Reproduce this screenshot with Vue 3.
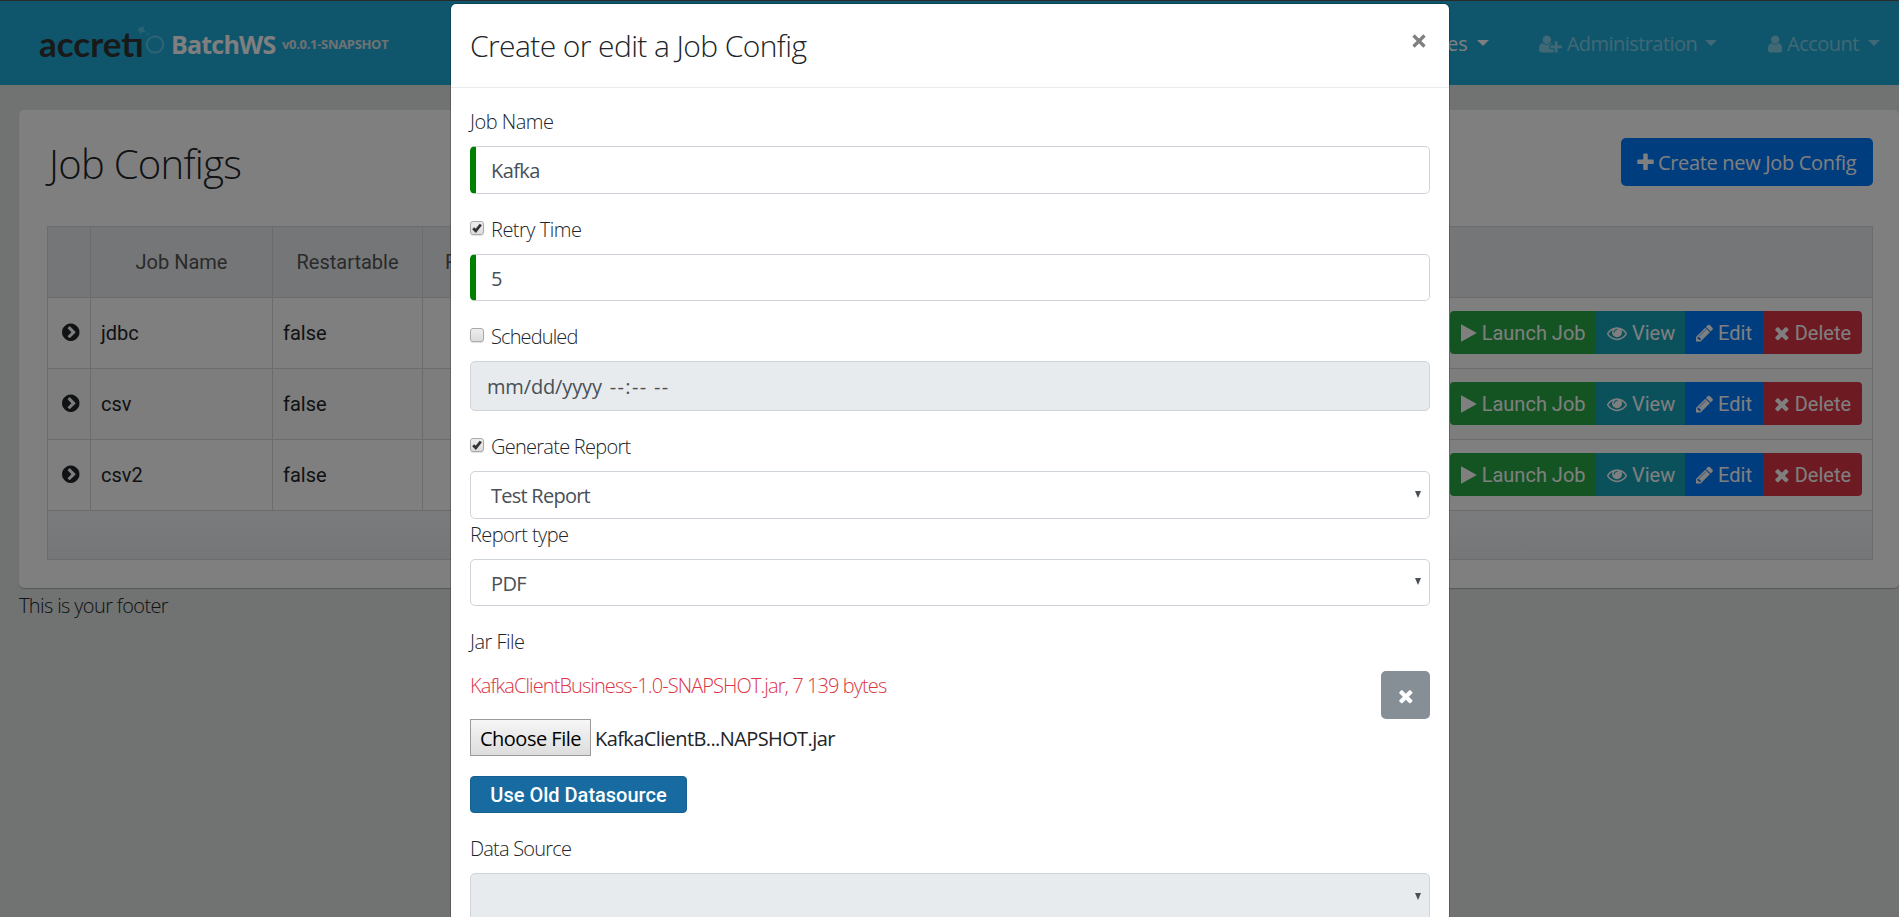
<script setup>
import { ref } from 'vue'

const icons = {
  play: { box: '192 0 1408 1792', w: 15.7, d: 'M1576 927l-1328 738q-23 13-39.5 3t-16.5-36v-1472q0-26 16.5-36t39.5 3l1328 738q23 13 23 31t-23 31z' },
  eye: { box: '0 0 1792 1792', w: 20, d: 'M1664 960q-152-236-381-353 61 104 61 225 0 185-131.5 316.5t-316.5 131.5-316.5-131.5-131.5-316.5q0-121 61-225-229 117-381 353 133 205 333.5 326.5t434.5 121.5 434.5-121.5 333.5-326.5zm-720-384q0-20-14-34t-34-14q-125 0-214.5 89.5t-89.5 214.5q0 20 14 34t34 14 34-14 14-34q0-86 61-147t147-61q20 0 34-14t14-34zm848 384q0 34-20 69-140 230-376.5 368.5t-499.5 138.5-499.5-139-376.5-368q-20-35-20-69t20-69q140-229 376.5-368t499.5-139 499.5 139 376.5 368q20 35 20 69z' },
  pencil: { box: '128 0 1536 1792', w: 17.1, d: 'M491 1536l91-91-235-235-91 91v107h128v128h107zm523-928q0-22-22-22-10 0-17 7l-542 542q-7 7-7 17 0 22 22 22 10 0 17-7l542-542q7-7 7-17zm-54-192l416 416-832 832h-416v-416zm683 96q0 53-37 90l-166 166-416-416 166-165q36-38 90-38 53 0 91 38l235 234q37 39 37 91z' },
  times: { box: '192 0 1408 1792', w: 15.7, d: 'M1490 1322q0 40-28 68l-136 136q-28 28-68 28t-68-28l-294-294-294 294q-28 28-68 28t-68-28l-136-136q-28-28-28-68t28-68l294-294-294-294q-28-28-28-68t28-68l136-136q28-28 68-28t68 28l294 294 294-294q28-28 68-28t68 28l136 136q28 28 28 68t-28 68l-294 294 294 294q28 28 28 68z' },
  plus: { box: '192 0 1408 1792', w: 15.7, d: 'M1600 736v192q0 40-28 68t-68 28h-416v416q0 40-28 68t-68 28h-192q-40 0-68-28t-28-68v-416h-416q-40 0-68-28t-28-68v-192q0-40 28-68t68-28h416v-416q0-40 28-68t68-28h192q40 0 68 28t28 68v416h416q40 0 68 28t28 68z' },
  chevron: { box: '128 0 1536 1792', w: 17.5, d: 'M845 1395l454-454q19-19 19-45t-19-45l-454-454q-19-19-45-19t-45 19l-102 102q-19 19-19 45t19 45l307 307-307 307q-19 19-19 45t19 45l102 102q19 19 45 19t45-19zm819-499q0 209-103 385.5t-279.5 279.5-385.5 103-385.5-103-279.5-279.5-103-385.5 103-385.5 279.5-279.5 385.5-103 385.5 103 279.5 279.5 103 385.5z' },
  user: { box: '256 0 1280 1792', w: 14.3, d: 'M1536 1399q0 109-62.5 187t-150.5 78h-854q-88 0-150.5-78t-62.5-187q0-85 8.5-160.5t31.5-152 58.5-131 94-89 134.5-34.5q131 128 313 128t313-128q76 0 134.5 34.5t94 89 58.5 131 31.5 152 8.5 160.5zm-256-887q0 159-112.5 271.5t-271.5 112.5-271.5-112.5-112.5-271.5 112.5-271.5 271.5-112.5 271.5 112.5 112.5 271.5z' },
  userPlus: { box: '0 0 2048 1792', w: 22.9, d: 'M704 896q-159 0-271.5-112.5t-112.5-271.5 112.5-271.5 271.5-112.5 271.5 112.5 112.5 271.5-112.5 271.5-271.5 112.5zm960 128h352q13 0 22.5 9.5t9.5 22.5v192q0 13-9.5 22.5t-22.5 9.5h-352v352q0 13-9.5 22.5t-22.5 9.5h-192q-13 0-22.5-9.5t-9.5-22.5v-352h-352q-13 0-22.5-9.5t-9.5-22.5v-192q0-13 9.5-22.5t22.5-9.5h352v-352q0-13 9.5-22.5t22.5-9.5h192q13 0 22.5 9.5t9.5 22.5v352zm-736 224q0 52 38 90t90 38h256v238q-68 50-171 50h-874q-121 0-194-69t-73-190q0-53 3.5-103.5t14-109 26.5-108.5 43-97.5 62-81 85.5-53.5 111.5-20q19 0 39 17 79 61 154.5 91.5t164.5 30.5 164.5-30.5 154.5-91.5q20-17 39-17 132 0 217 96h-223q-52 0-90 38t-38 90v192z' },
}

const jobs = ref([
  { name: 'jdbc', restartable: false },
  { name: 'csv', restartable: false },
  { name: 'csv2', restartable: false },
])

const actions = [
  { label: 'Launch Job', icon: 'play', kind: 'launch' },
  { label: 'View', icon: 'eye', kind: 'view' },
  { label: 'Edit', icon: 'pencil', kind: 'edit' },
  { label: 'Delete', icon: 'times', kind: 'delete' },
]
</script>

<template>
  <div class="page">
    <header class="navbar">
      <div class="brand">
        <span class="logo">
          <span class="logo-text">accretı</span>
          <svg class="logo-ring" width="30" height="30" viewBox="0 0 30 30">
            <circle cx="18" cy="19.500" r="8.200" fill="none" stroke="currentColor" stroke-width="2.200" />
            <path d="M1 1.500l3 1.300L7.300 1 6.500 4.300 8.500 7 5.200 7 3 9.500 2.700 6.300 0 4.800 2.200 3.800z" fill="currentColor" />
            <circle cx="10.800" cy="9" r="1.100" fill="currentColor" />
          </svg>
        </span>
        <span class="brand-name">BatchWS</span>
        <span class="version">v0.0.1-SNAPSHOT</span>
      </div>
      <nav class="menu">
        <span class="menu-item active"><span class="t-entities">Entities</span><i class="caret"></i></span>
        <span class="menu-item admin">
          <svg class="icon" :viewBox="icons.userPlus.box" width="22.9" height="20"><path :d="icons.userPlus.d" /></svg>
          <span class="t-admin">Administration</span><i class="caret"></i>
        </span>
        <span class="menu-item account">
          <svg class="icon" :viewBox="icons.user.box" width="14.3" height="20"><path :d="icons.user.d" /></svg>
          <span class="t-account">Account</span><i class="caret"></i>
        </span>
      </nav>
    </header>

    <main class="card">
      <div class="card-head">
        <h2>Job Configs</h2>
        <button class="create">
          <svg class="icon" :viewBox="icons.plus.box" width="17" height="21"><path :d="icons.plus.d" /></svg>
          <span>Create new Job Config</span>
        </button>
      </div>
      <div class="table">
        <div class="row head">
          <div></div><div>Job Name</div><div>Restartable</div><div class="retry"><span>Retry Time</span></div>
        </div>
        <div v-for="job in jobs" :key="job.name" class="row">
          <div class="toggle"><svg class="icon" :viewBox="icons.chevron.box" width="17.5" height="20.400"><path :d="icons.chevron.d" /></svg></div>
          <div>{{ job.name }}</div>
          <div>{{ job.restartable }}</div>
          <div class="actions">
            <span v-for="a in actions" :key="a.kind" class="action" :class="a.kind">
              <svg class="icon" :viewBox="icons[a.icon].box" :width="icons[a.icon].w" height="20"><path :d="icons[a.icon].d" /></svg>
              <span>{{ a.label }}</span>
            </span>
          </div>
        </div>
        <div class="table-foot"></div>
      </div>
    </main>
    <footer>This is your footer</footer>

    <div class="backdrop">
      <section class="modal">
        <div class="modal-head">
          <h4>Create or edit a Job Config</h4>
          <svg class="close" width="14" height="14" viewBox="0 0 14 14"><path d="M1.500 1.500l11 11M12.500 1.500l-11 11" /></svg>
        </div>
        <div class="modal-body">
          <label class="t-jobname">Job Name</label>
          <div class="field valid h48"><span class="t-kafka">Kafka</span></div>

          <label class="gap"><i class="check"><svg viewBox="0 0 14 14"><path d="M3.200 7.200l2.600 2.600 5-6.300" /></svg></i><span class="t-retry">Retry Time</span></label>
          <div class="field valid h47"><span>5</span></div>

          <label class="gap"><i class="check"></i><span class="t-sched">Scheduled</span></label>
          <div class="field disabled date"><span class="t-date">mm/dd/yyyy</span><span class="t-time">--:-- --</span></div>

          <label class="gap"><i class="check"><svg viewBox="0 0 14 14"><path d="M3.200 7.200l2.600 2.600 5-6.300" /></svg></i><span class="t-gen">Generate Report</span></label>
          <div class="field h48 select"><span class="t-test">Test Report</span><i class="arrow"></i></div>

          <label class="t-type">Report type</label>
          <div class="field h47 select"><span class="t-pdf">PDF</span><i class="arrow"></i></div>

          <label class="gap t-jar">Jar File</label>
          <div class="upload">
            <span class="file-info">KafkaClientBusiness-1.0-SNAPSHOT.jar, 7 139 bytes</span>
            <button class="remove"><svg class="icon" :viewBox="icons.times.box" width="15.7" height="20"><path :d="icons.times.d" /></svg></button>
          </div>
          <div class="chooser">
            <button class="choose"><span>Choose File</span></button>
            <span class="file-name">KafkaClientB...NAPSHOT.jar</span>
          </div>
          <button class="old-source"><span>Use Old Datasource</span></button>

          <label class="gap t-ds">Data Source</label>
          <div class="field h48 select disabled"><span></span><i class="arrow"></i></div>
        </div>
      </section>
    </div>
    <div class="top-line"></div>
  </div>
</template>

<style>
body {
  background: #e1e6e3;
  overflow: hidden;
}
</style>

<style scoped>
* {
  box-sizing: border-box;
}
.page {
  position: relative;
  height: 917px;
  overflow: hidden;
  background: #e1e6e3;
  color: #212529;
  font: 300 20px/30px "Open Sans", "Noto Sans", sans-serif;
  white-space: nowrap;
}
button {
  border: 0;
  padding: 0;
  font: inherit;
  color: inherit;
}
.icon {
  flex: none;
  fill: currentColor;
}

/* navbar */
.navbar {
  display: flex;
  justify-content: space-between;
  height: 85px;
  padding: 0 19px 0 39px;
  background: #1eacda;
}
.brand {
  display: flex;
  align-items: center;
  color: #fff;
}
.logo {
  display: flex;
  width: 132px;
  height: 85px;
  align-items: center;
}
.logo-text {
  flex: none;
  width: 98px;
  font: 700 35px/40px Lato, sans-serif;
  color: #333;
}
.logo-ring {
  flex: none;
  margin-top: -5px;
  color: #56c4e8;
}
.brand-name {
  width: 111px;
  font-size: 25px;
  font-weight: 700;
  letter-spacing: -0.8px;
  margin-top: 3px;
}
.version {
  font-size: 13px;
  font-weight: 700;
  letter-spacing: -0.32px;
  margin-top: 3px;
  color: #dde5e8;
}
.menu {
  display: flex;
  align-items: center;
  font-weight: 400;
}
.menu-item {
  display: flex;
  align-items: center;
  padding-top: 3px;
  color: rgba(255, 255, 255, 0.45);
}
.menu-item.active {
  color: #fff;
}
.admin {
  margin-left: 50px;
}
.account {
  margin-left: 51px;
}
.menu-item .icon {
  margin-right: 5px;
}
.caret {
  margin: -3px 0 0 9px;
  border: 6px solid transparent;
  border-top-color: currentColor;
  border-bottom: 0;
}
.t-admin {
  width: 129px;
  letter-spacing: -0.55px;
}
.t-account {
  width: 72px;
  letter-spacing: -0.5px;
}

/* job list */
.card {
  margin: 25px 0 0 19px;
  height: 478px;
  padding: 28px 26px 0 28px;
  border-radius: 5px;
  background: #fff;
  box-shadow: 0 1px 1px rgba(0, 0, 0, 0.25);
}
.card-head {
  display: flex;
  justify-content: space-between;
  height: 88px;
}
h2 {
  margin: 0;
  padding: 2px 0 0 2px;
  font-size: 40px;
  font-weight: 300;
  line-height: 48px;
  letter-spacing: -0.7px;
}
.create {
  display: flex;
  align-items: center;
  width: 252px;
  height: 48px;
  padding: 1px 0 0 16px;
  gap: 4px;
  border-radius: 5px;
  background: #007bff;
  color: #fff;
  font-weight: 400;
  letter-spacing: -0.33px;
}
.table {
  border: 1px solid #d9d9d9;
  font-family: Roboto, sans-serif;
  font-weight: 400;
}
.row {
  display: grid;
  grid-template-columns: 43px 182px 150px 1fr;
  height: 71px;
  border-bottom: 1px solid #d9d9d9;
}
.row:nth-child(odd):not(.head) {
  background: #fbfbfb;
}
.row > div {
  display: flex;
  align-items: center;
  padding: 0 0 1px 10px;
  border-right: 1px solid #d9d9d9;
}
.row > div:last-child {
  border-right: 0;
}
.row.head {
  background: #ebedf0;
  color: #555;
}
.row.head > div {
  justify-content: center;
  padding: 0;
}
.row.head > .retry {
  justify-content: flex-start;
  padding-left: 22px;
}
.retry span {
  width: 12px;
  overflow: hidden;
}
.row > .toggle {
  padding-left: 14px;
}
.row > .actions {
  justify-content: flex-end;
  padding-right: 10px;
}
.action {
  display: flex;
  align-items: center;
  height: 43px;
  padding-left: 11px;
  gap: 5px;
  color: #fff;
}
.launch { width: 146px; background: #28a745; border-radius: 4px 0 0 4px; }
.view { width: 89px; background: #17a2b8; }
.edit { width: 78px; background: #007bff; }
.delete { width: 99px; background: #dc3545; border-radius: 0 4px 4px 0; }
.table-foot {
  height: 48px;
  background: linear-gradient(#f6f7f9, #ebedf0);
}
footer {
  margin-top: 3px;
  padding-left: 19px;
  letter-spacing: -0.63px;
}

/* dialog */
.backdrop {
  position: absolute;
  inset: 0;
  display: flex;
  justify-content: center;
  align-items: flex-start;
  padding: 3px 0 0 1px;
  background: rgba(0, 0, 0, 0.5);
}
.modal {
  width: 1000px;
  height: 1100px;
  border: 1px solid rgba(0, 0, 0, 0.2);
  border-radius: 6px;
  background: #fff;
  background-clip: padding-box;
}
.modal-head {
  display: flex;
  justify-content: space-between;
  height: 84px;
  padding: 20px 23px 0 19px;
  border-bottom: 1px solid #e9ecef;
}
h4 {
  margin: 0;
  padding-top: 1px;
  font-size: 30px;
  font-weight: 300;
  line-height: 42px;
  letter-spacing: -0.6px;
}
.close {
  margin-top: 10px;
  fill: none;
  stroke: #7f7f7f;
  stroke-width: 3.2;
}
.modal-body {
  padding: 18px 19px 0;
}
label {
  display: flex;
  height: 40px;
  padding-top: 1px;
  letter-spacing: -0.5px;
}
.gap {
  margin-top: 20px;
}
.t-sched {
  letter-spacing: -0.88px;
}
.t-gen {
  letter-spacing: -0.74px;
}
.t-type {
  letter-spacing: -0.6px;
}
.t-jar {
  height: 45px;
}
.t-ds {
  letter-spacing: -0.8px;
}
.check {
  width: 14px;
  height: 14px;
  margin: 6px 7px 0 0;
  border: 1px solid #a9a9a9;
  border-radius: 3px;
  background: linear-gradient(#eee, #dcdcdc);
  box-shadow: 0 1px 1px rgba(0, 0, 0, 0.12);
}
.check svg {
  display: block;
  width: 14px;
  height: 14px;
  margin: -1px;
  fill: none;
  stroke: #333;
  stroke-width: 2.8;
}
.field {
  display: flex;
  align-items: center;
  height: 48px;
  padding: 2px 8px 0 20px;
  border: 1px solid #ced4da;
  border-radius: 5px;
  background: #fff;
  color: #495057;
  font-weight: 400;
  letter-spacing: -0.6px;
}
.h47 {
  height: 47px;
}
.valid {
  padding-left: 15px;
  border-left: 6px solid #008000;
}
.disabled {
  background: #e7ebee;
}
.date {
  height: 50px;
  padding-left: 16px;
  gap: 8px;
}
.t-date {
  letter-spacing: -0.15px;
}
.t-time {
  letter-spacing: 1.35px;
}
.t-test {
  letter-spacing: -0.75px;
}
.select {
  justify-content: space-between;
}
.arrow {
  margin-top: -4px;
  border: 3.5px solid transparent;
  border-top: 7px solid #495057;
  border-bottom: 0;
}
.upload {
  display: flex;
  justify-content: space-between;
  height: 48px;
}
.file-info {
  color: #dc3545;
  letter-spacing: -0.91px;
}
.remove {
  display: flex;
  align-items: center;
  justify-content: center;
  width: 49px;
  height: 48px;
  padding-top: 2px;
  border-radius: 5px;
  background: #868e96;
  color: #fff;
}
.chooser {
  display: flex;
  align-items: center;
  gap: 4px;
  height: 37px;
  font-weight: 400;
}
.choose {
  width: 121px;
  height: 37px;
  padding-top: 2px;
  border: 1px solid #9a9a9a;
  background: linear-gradient(#f6f6f6, #dddddd);
  color: #000;
  letter-spacing: -0.5px;
}
.file-name {
  padding-top: 2px;
  letter-spacing: -0.6px;
}
.old-source {
  display: block;
  width: 217px;
  height: 37px;
  margin-top: 20px;
  border: 1px solid #156090;
  border-radius: 4px;
  background: #186ba0;
  color: #fff;
  font-family: Roboto, sans-serif;
  font-weight: 500;
}
.top-line {
  position: absolute;
  inset: 0 0 auto;
  height: 1px;
  background: #2b2b2b;
}
</style>
